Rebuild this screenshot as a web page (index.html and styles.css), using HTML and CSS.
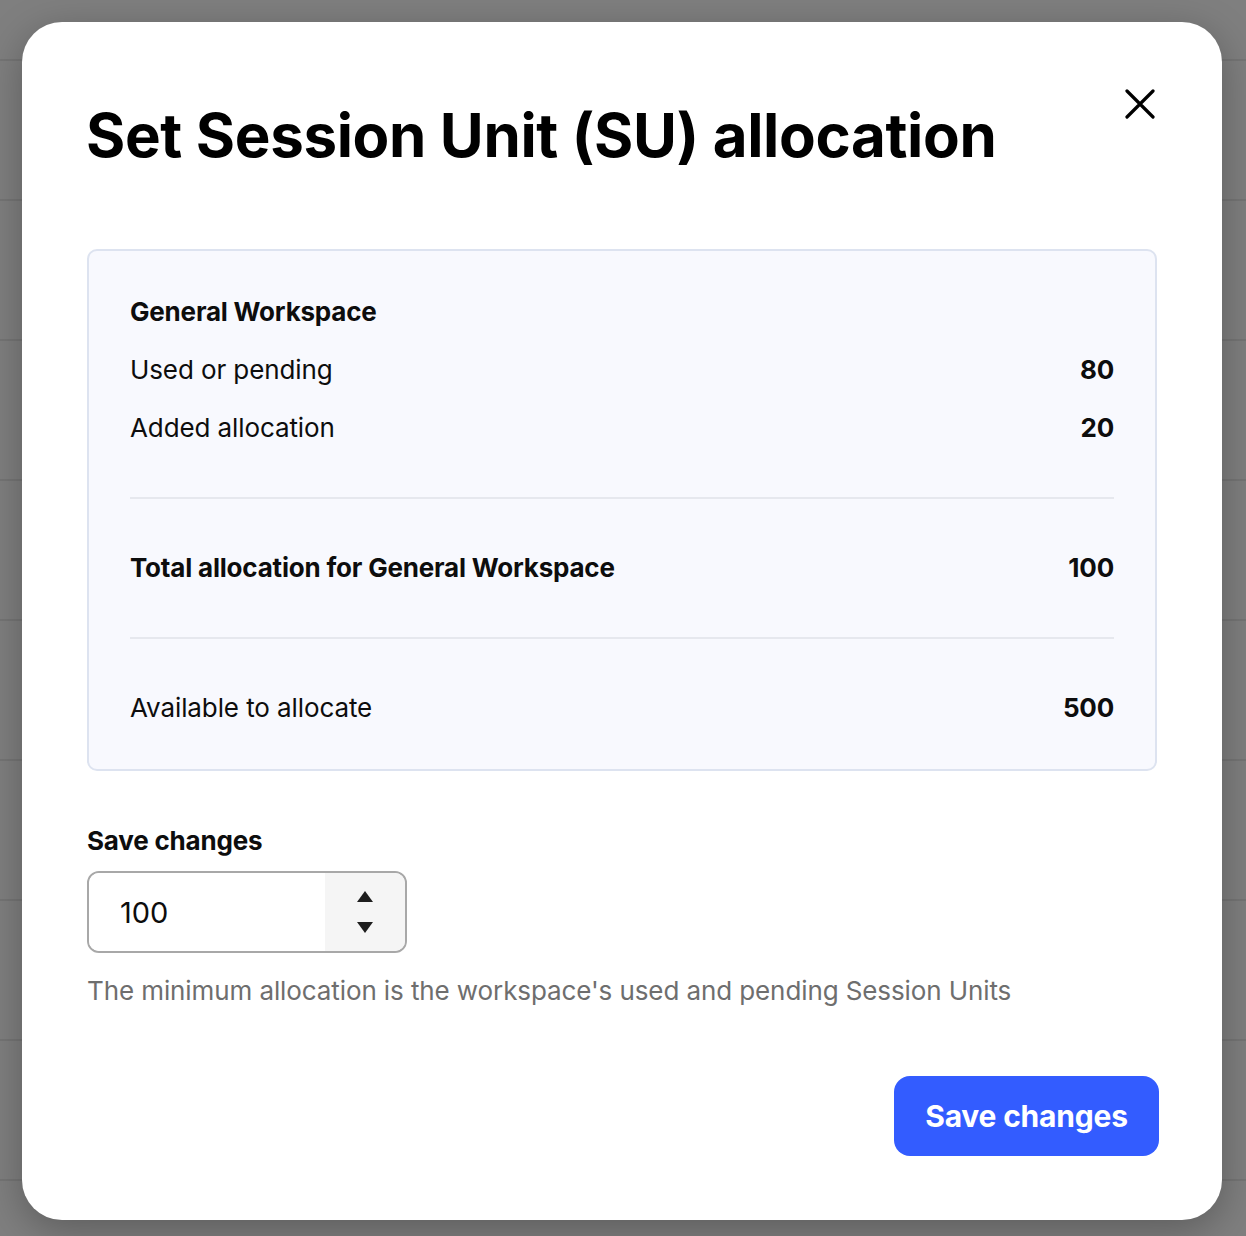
FILE: index.html
```html
<!DOCTYPE html>
<html lang="en">
<head>
<meta charset="utf-8">
<title>Set Session Unit (SU) allocation</title>
<link rel="stylesheet" href="styles.css">
</head>
<body>
<div class="backdrop">
  <div class="modal" role="dialog" aria-labelledby="modal-title">
    <div class="modal-header">
      <h1 class="modal-title" id="modal-title">Set Session Unit (SU) allocation</h1>
      <button class="close-btn" aria-label="Close">
        <svg viewBox="0 0 30 30" width="30" height="30" aria-hidden="true">
          <path d="M2 2 L28 28 M28 2 L2 28" stroke="#000" stroke-width="3.2" stroke-linecap="round" fill="none"/>
        </svg>
      </button>
    </div>

    <div class="summary">
      <div class="summary-group">
        <div class="row row-heading">General Workspace</div>
        <div class="row"><span>Used or pending</span><span class="val">80</span></div>
        <div class="row"><span>Added allocation</span><span class="val">20</span></div>
      </div>
      <div class="divider"></div>
      <div class="row row-strong"><span>Total allocation for General Workspace</span><span class="val">100</span></div>
      <div class="divider"></div>
      <div class="row"><span>Available to allocate</span><span class="val">500</span></div>
    </div>

    <div class="field">
      <label class="field-label" for="alloc">Save changes</label>
      <div class="number-input">
        <input id="alloc" class="number-value" type="text" value="100">
        <div class="spinner">
          <span class="arrow arrow-up"></span>
          <span class="arrow arrow-down"></span>
        </div>
      </div>
      <p class="hint">The minimum allocation is the workspace's used and pending Session Units</p>
    </div>

    <div class="actions">
      <button class="primary-btn">Save changes</button>
    </div>
  </div>
</div>
</body>
</html>
```

FILE: styles.css
```css
* { box-sizing: border-box; }

html, body {
  margin: 0;
  padding: 0;
}

body {
  width: 1246px;
  height: 1236px;
  overflow: hidden;
  background-color: #7f7f7f;
  background-image: repeating-linear-gradient(to bottom,
    transparent 0, transparent 59px,
    #757575 59px, #757575 61px,
    transparent 61px, transparent 140px);
  font-family: Inter, "Liberation Sans", sans-serif;
  color: #0d0d0d;
}

.backdrop {
  padding: 22px 24px 16px 22px;
  display: flex;
}

.modal {
  width: 1200px;
  height: 1198px;
  background: #fff;
  border-radius: 40px;
  box-shadow: 0 10px 40px rgba(0, 0, 0, 0.28);
  padding: 64px 64px 64px 65px;
  display: flex;
  flex-direction: column;
}

.modal-header {
  display: flex;
  justify-content: space-between;
  align-items: flex-start;
  margin-bottom: 78px;
}

.modal-title {
  margin: 13px 0 0 -1px;
  font-size: 60px;
  line-height: 72px;
  font-weight: 700;
  color: #000;
  letter-spacing: -0.35px;
}

.close-btn {
  width: 40px;
  height: 40px;
  margin: -2px -2px 0 0;
  padding: 0;
  border: none;
  background: none;
  display: flex;
  align-items: center;
  justify-content: center;
}

.summary {
  width: 1070px;
  border: 2px solid #dde3f0;
  border-radius: 10px;
  background: #f8f9fe;
  padding: 44px 41px 44px 41px;
  display: flex;
  flex-direction: column;
  gap: 52px;
}

.summary-group {
  display: flex;
  flex-direction: column;
  gap: 24px;
}

.row {
  display: flex;
  justify-content: space-between;
  font-size: 26px;
  line-height: 34px;
  letter-spacing: -0.1px;
  color: #0d0d0d;
}

.row-heading, .row-strong {
  font-weight: 700;
  letter-spacing: -0.2px;
}

.val {
  font-weight: 700;
  letter-spacing: -0.2px;
}

.divider {
  height: 2px;
  background: #e6e8ee;
}

.field {
  margin-top: 53px;
  display: flex;
  flex-direction: column;
}

.field-label {
  font-size: 26px;
  line-height: 34px;
  font-weight: 700;
  letter-spacing: -0.2px;
  color: #0d0d0d;
}

.number-input {
  margin-top: 13px;
  width: 320px;
  height: 82px;
  border: 2px solid #a8a8a8;
  border-radius: 12px;
  display: flex;
  overflow: hidden;
}

.number-value {
  flex: 1;
  min-width: 0;
  border: none;
  outline: none;
  background: #fff;
  padding: 0 0 0 31px;
  font-family: Inter, "Liberation Sans", sans-serif;
  font-size: 29px;
  color: #0d0d0d;
}

.spinner {
  width: 80px;
  background: #f5f5f5;
  display: flex;
  flex-direction: column;
  align-items: center;
  justify-content: center;
  gap: 20px;
}

.arrow {
  width: 0;
  height: 0;
  border-left: 8px solid transparent;
  border-right: 8px solid transparent;
}

.arrow-up {
  border-bottom: 11px solid #1e1e1e;
}

.arrow-down {
  border-top: 11px solid #1e1e1e;
}

.hint {
  margin: 21px 0 0 0;
  font-size: 26px;
  line-height: 34px;
  letter-spacing: -0.1px;
  color: #6e6e6e;
}

.actions {
  margin-top: auto;
  display: flex;
  justify-content: flex-end;
}

.primary-btn {
  width: 265px;
  height: 80px;
  margin-right: -1px;
  border: none;
  border-radius: 16px;
  background: #335cff;
  color: #fff;
  font-family: Inter, "Liberation Sans", sans-serif;
  font-size: 30px;
  font-weight: 700;
  letter-spacing: -0.2px;
}
```
